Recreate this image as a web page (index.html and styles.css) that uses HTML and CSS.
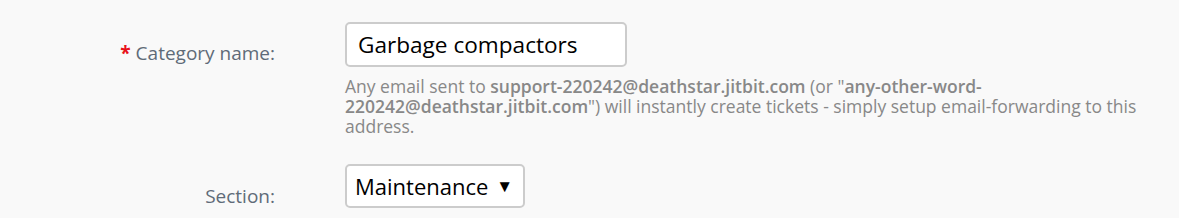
FILE: index.html
```html
<!DOCTYPE html>
<html lang="en">
<head>
  <meta charset="UTF-8" />
  <title>Category settings</title>
  <link rel="stylesheet" href="styles.css">
</head>
<body>
  <form class="settings-form">
    <div class="form-row">
      <label class="form-label" for="catName"><span class="req">*</span> Category name:</label>
      <div class="form-field">
        <input type="text" id="catName" class="text-input" value="Garbage compactors" />
        <p class="hint">Any email sent to <b>support-220242@deathstar.jitbit.com</b> (or "<b>any-other-word-220242@deathstar.jitbit.com</b>") will instantly create tickets - simply setup email-forwarding to this address.</p>
      </div>
    </div>

    <div class="form-row section-row">
      <label class="form-label" for="section">Section:</label>
      <div class="form-field">
        <div class="select-wrap">
          <select id="section" class="select-input">
            <option>Maintenance</option>
          </select>
        </div>
      </div>
    </div>
  </form>
</body>
</html>
```

FILE: styles.css
```css
body {
  margin: 0;
  background-color: #f9f9f9;
  font-family: "Open Sans", "Noto Sans", sans-serif;
}

.settings-form {
  padding-top: 22px;
}

.form-row {
  display: flex;
  align-items: flex-start;
}

.section-row {
  margin-top: 28px;
}

.form-label {
  width: 275px;
  flex-shrink: 0;
  text-align: right;
  padding-top: 19px;
  font-size: 19px;
  line-height: 24px;
  color: #5f6b78;
}

.section-row .form-label {
  padding-top: 20px;
}

.req {
  color: #e8101a;
  font-weight: bold;
}

.form-field {
  margin-left: 70px;
  width: 800px;
}

.text-input {
  box-sizing: border-box;
  width: 282px;
  height: 45px;
  padding: 0 11px;
  border: 2px solid #cccccc;
  border-radius: 5px;
  background: #fff;
  font-family: "Open Sans", sans-serif;
  font-size: 22.6px;
  color: #000;
  outline: none;
}

.hint {
  margin: 9px 0 0;
  font-size: 17.5px;
  line-height: 20px;
  color: #888888;
}

.hint b {
  font-weight: 600;
}

.select-wrap {
  position: relative;
  display: inline-block;
}

.select-wrap::after {
  content: "\25BC";
  position: absolute;
  right: 12px;
  top: 10px;
  font-size: 17px;
  color: #000;
  pointer-events: none;
}

.select-input {
  appearance: none;
  -webkit-appearance: none;
  box-sizing: border-box;
  width: 180px;
  height: 44px;
  padding: 0 30px 0 8px;
  border: 2px solid #cccccc;
  border-radius: 5px;
  background: #fff;
  font-family: "Open Sans", sans-serif;
  font-size: 22px;
  color: #000;
}
```
